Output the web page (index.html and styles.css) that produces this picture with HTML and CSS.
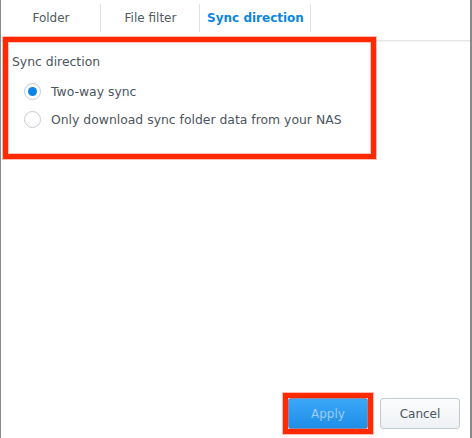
FILE: index.html
```html
<!DOCTYPE html>
<html>
<head>
<meta charset="utf-8">
<link rel="stylesheet" href="styles.css">
</head>
<body>
<div class="window">
  <div class="tabs">
    <div class="tab">Folder</div>
    <div class="tab">File filter</div>
    <div class="tab active">Sync direction<span class="caret"></span></div>
  </div>
  <div class="content">
    <div class="section">
      <div class="legend">Sync direction</div>
      <label class="radio-row"><span class="radio checked"></span>Two-way sync</label>
      <label class="radio-row"><span class="radio"></span>Only download sync folder data from your NAS</label>
    </div>
    <div class="mark mark-section"></div>
  </div>
  <div class="footer">
    <div class="btn-wrap">
      <button class="btn primary">Apply</button>
      <div class="mark mark-btn"></div>
    </div>
    <button class="btn">Cancel</button>
  </div>
</div>
</body>
</html>
```
FILE: styles.css
```css
html, body {
  margin: 0;
  padding: 0;
  background: #fff;
}
body {
  width: 472px;
  height: 438px;
  overflow: hidden;
  font-family: "DejaVu Sans", Verdana, sans-serif;
  font-size: 12px;
  color: #4b5560;
}
.window {
  box-sizing: border-box;
  width: 472px;
  height: 438px;
  border-left: 1px solid #8a8a8a;
  border-right: 2px solid #8a8a8a;
  display: flex;
  flex-direction: column;
  position: relative;
}
.tabs {
  display: flex;
  height: 40px;
  border-bottom: 1px solid #e4e6e8;
  box-shadow: 0 1px 0 #f3f4f5;
}
.tab {
  position: relative;
  display: flex;
  align-items: center;
  justify-content: center;
  width: 99px;
  height: 36px;
  color: #505a64;
  box-sizing: border-box;
}
.tab:first-child { width: 100px; }
.tab.active {
  width: 111px;
  color: #0a86e0;
  font-weight: bold;
}
.tab::after {
  content: "";
  position: absolute;
  right: 0;
  top: 4px;
  height: 28px;
  border-right: 1px solid #dbe3ea;
}
.caret {
  position: absolute;
  left: 50%;
  bottom: -4px;
  margin-left: -4px;
  width: 0;
  height: 0;
  border-left: 4px solid transparent;
  border-right: 4px solid transparent;
  border-bottom: 4px solid #d6d9dc;
}
.content {
  position: relative;
  flex: 1;
  font-size: 12.4px;
}
.section {
  padding: 13px 0 0 11px;
}
.legend {
  height: 16px;
  line-height: 16px;
  margin-bottom: 7px;
}
.radio-row {
  display: flex;
  align-items: center;
  height: 28px;
  padding-left: 12px;
}
.radio {
  box-sizing: border-box;
  width: 17px;
  height: 17px;
  border: 1px solid #c4ccd4;
  border-radius: 50%;
  background: #fff;
  margin-right: 10px;
  position: relative;
}
.radio.checked::after {
  content: "";
  position: absolute;
  left: 3px;
  top: 3px;
  width: 9px;
  height: 9px;
  border-radius: 50%;
  background: #0a86e6;
}
.mark {
  position: absolute;
  box-sizing: border-box;
  border: 5px solid #ff2a00;
  box-shadow: 0 0 0 1px rgba(255, 120, 100, 0.5), inset 0 0 0 1px rgba(255, 140, 120, 0.5);
}
.mark-section {
  left: 2px;
  top: -4px;
  width: 373px;
  height: 122px;
}
.footer {
  display: flex;
  justify-content: flex-end;
  align-items: center;
  gap: 12px;
  padding: 0 10px 9px 0;
}
.btn-wrap {
  position: relative;
}
.btn {
  font-family: "DejaVu Sans", Verdana, sans-serif;
  font-size: 12px;
  box-sizing: border-box;
  width: 80px;
  height: 31px;
  border: 1px solid #c2c9d0;
  border-radius: 3px;
  background: linear-gradient(#fbfcfd, #eef1f4);
  color: #4b5560;
  padding: 0;
  display: block;
}
.btn.primary {
  border-color: #1b84d8;
  background: linear-gradient(#3aa7f7, #1e8ee8);
  color: #9ccdf5;
}
.mark-btn {
  left: -5px;
  top: -5px;
  width: 90px;
  height: 41px;
}
```
